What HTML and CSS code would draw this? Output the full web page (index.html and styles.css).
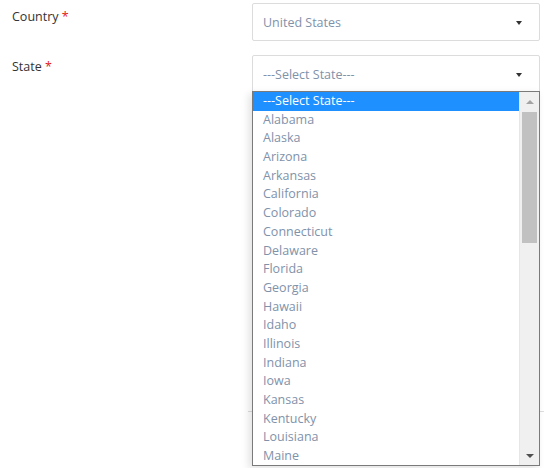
FILE: index.html
```html
<!DOCTYPE html>
<html>
<head>
<meta charset="utf-8">
<link rel="stylesheet" href="styles.css">
</head>
<body>
<div class="form">
  <div class="row">
    <label class="label">Country <span class="req">*</span></label>
    <div class="field">
      <div class="select"><span class="value">United States</span><span class="caret"></span></div>
    </div>
  </div>
  <div class="row row-state">
    <label class="label">State <span class="req">*</span></label>
    <div class="field">
      <div class="select"><span class="value">---Select State---</span><span class="caret"></span></div>
      <div class="listbox">
        <ul class="options">
          <li class="opt selected">---Select State---</li>
          <li class="opt">Alabama</li>
          <li class="opt">Alaska</li>
          <li class="opt">Arizona</li>
          <li class="opt">Arkansas</li>
          <li class="opt">California</li>
          <li class="opt">Colorado</li>
          <li class="opt">Connecticut</li>
          <li class="opt">Delaware</li>
          <li class="opt">Florida</li>
          <li class="opt">Georgia</li>
          <li class="opt">Hawaii</li>
          <li class="opt">Idaho</li>
          <li class="opt">Illinois</li>
          <li class="opt">Indiana</li>
          <li class="opt">Iowa</li>
          <li class="opt">Kansas</li>
          <li class="opt">Kentucky</li>
          <li class="opt">Louisiana</li>
          <li class="opt">Maine</li>
        </ul>
        <div class="scrollbar">
          <span class="arrow up"></span>
          <span class="thumb"></span>
          <span class="arrow down"></span>
        </div>
      </div>
    </div>
  </div>
  <div class="divider"></div>
</div>
</body>
</html>
```
FILE: styles.css
```css
html, body {
  margin: 0;
  padding: 0;
  background: #ffffff;
}
body {
  font-family: "Open Sans", "Noto Sans", sans-serif;
  font-size: 12.5px;
  color: #333333;
  width: 544px;
  height: 468px;
  overflow: hidden;
}
.form {
  padding-top: 3px;
}
.row {
  display: grid;
  grid-template-columns: 252px 288px;
}
.row-state {
  margin-top: 14px;
}
.label {
  padding-left: 12px;
  padding-top: 5px;
  line-height: 18px;
  color: #333333;
}
.row-state .label {
  padding-top: 3px;
}
.req {
  color: #e02020;
}
.field {
  position: relative;
}
.select {
  box-sizing: border-box;
  height: 38px;
  border: 1px solid #dcdcdc;
  border-radius: 2px;
  display: flex;
  align-items: center;
  padding: 0 17px 0 10px;
  color: #7f92aa;
}
.value {
  flex: 1;
}
.caret {
  width: 0;
  height: 0;
  border-left: 3.5px solid transparent;
  border-right: 3.5px solid transparent;
  border-top: 4px solid #333333;
  margin-top: 2px;
}
.listbox {
  position: absolute;
  top: 36px;
  left: 0;
  width: 288px;
  height: 375px;
  box-sizing: border-box;
  border: 1px solid #7a7a7a;
  background: #ffffff;
  display: flex;
  box-shadow: -3px 3px 8px rgba(0, 0, 0, 0.12);
  z-index: 2;
}
.options {
  list-style: none;
  margin: 0;
  padding: 0;
  flex: 1;
  overflow: hidden;
}
.opt {
  height: 18.7px;
  line-height: 18.7px;
  padding-left: 10px;
  color: #7f92aa;
  white-space: nowrap;
}
.opt.selected {
  background: #1e90ff;
  color: #ffffff;
}
.scrollbar {
  width: 19px;
  background: #f0f0f0;
  border-left: 1px solid #e6e6e6;
  display: flex;
  flex-direction: column;
  align-items: center;
}
.arrow {
  width: 0;
  height: 0;
  border-left: 4px solid transparent;
  border-right: 4px solid transparent;
}
.arrow.up {
  border-bottom: 4px solid #a3a3a3;
  margin-top: 8px;
}
.arrow.down {
  border-top: 4px solid #505050;
  margin-top: auto;
  margin-bottom: 7px;
}
.thumb {
  width: 15px;
  height: 131px;
  background: #c1c1c1;
  margin-top: 8px;
}
.divider {
  margin-top: 318px;
  margin-left: 248px;
  border-top: 1px solid #dddddd;
}
```
